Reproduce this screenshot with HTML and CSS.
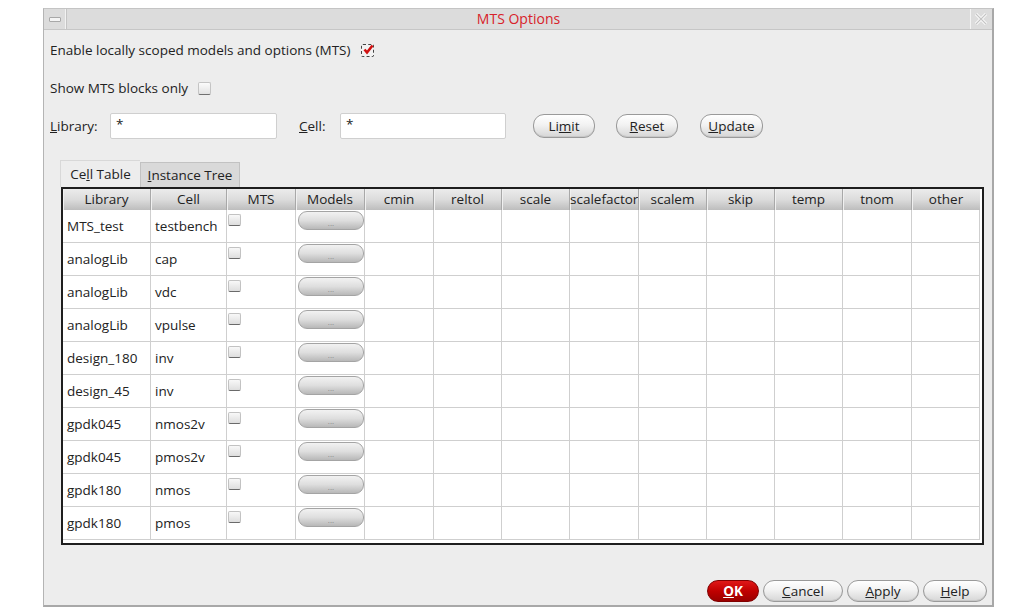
FILE: index.html
```html
<!DOCTYPE html>
<html>
<head>
<meta charset="utf-8">
<link rel="stylesheet" href="styles.css">
</head>
<body>
<div class="window">
  <div class="titlebar">
    <div class="tb-btn tb-min"><span class="min-bar"></span></div>
    <div class="title">MTS Options</div>
    <div class="tb-btn tb-close">
      <svg width="14" height="14" viewBox="0 0 14 14"><path d="M2 2 L12 12 M12 2 L2 12" stroke="#fff" stroke-width="3" fill="none"/><path d="M2 2 L12 12 M12 2 L2 12" stroke="#c4c4c4" stroke-width="1.2" fill="none"/></svg>
    </div>
  </div>
  <div class="body">
    <div class="line line1">
      <span>Enable locally scoped models and options (MTS)</span>
      <span class="chk chk-on"><svg width="12" height="12" viewBox="0 0 12 12"><path d="M2.5 5.5 L5 8.5 L10.5 1.5" stroke="#d01010" stroke-width="2.6" fill="none"/></svg></span>
    </div>
    <div class="line line2">
      <span>Show MTS blocks only</span>
      <span class="chk"></span>
    </div>
    <div class="filter">
      <label class="lbl lbl-lib"><u>L</u>ibrary:</label>
      <div class="input input-lib">*</div>
      <label class="lbl lbl-cell"><u>C</u>ell:</label>
      <div class="input input-cell">*</div>
      <button class="btn btn-limit">Li<u>m</u>it</button>
      <button class="btn btn-reset"><u>R</u>eset</button>
      <button class="btn btn-update"><u>U</u>pdate</button>
    </div>
    <div class="tabs">
      <div class="tab active">Ce<u>l</u>l Table</div>
      <div class="tab"><u>I</u>nstance Tree</div>
    </div>
    <div class="table">
      <div class="grid">
        <div class="th">Library</div><div class="th">Cell</div><div class="th">MTS</div><div class="th">Models</div><div class="th">cmin</div><div class="th">reltol</div><div class="th">scale</div><div class="th">scalefactor</div><div class="th">scalem</div><div class="th">skip</div><div class="th">temp</div><div class="th">tnom</div><div class="th">other</div>

        <div class="td">MTS_test</div><div class="td">testbench</div><div class="td tdc"><span class="cb"></span></div><div class="td tdm"><span class="mb">...</span></div><div class="td"></div><div class="td"></div><div class="td"></div><div class="td"></div><div class="td"></div><div class="td"></div><div class="td"></div><div class="td"></div><div class="td"></div>

        <div class="td">analogLib</div><div class="td">cap</div><div class="td tdc"><span class="cb"></span></div><div class="td tdm"><span class="mb">...</span></div><div class="td"></div><div class="td"></div><div class="td"></div><div class="td"></div><div class="td"></div><div class="td"></div><div class="td"></div><div class="td"></div><div class="td"></div>

        <div class="td">analogLib</div><div class="td">vdc</div><div class="td tdc"><span class="cb"></span></div><div class="td tdm"><span class="mb">...</span></div><div class="td"></div><div class="td"></div><div class="td"></div><div class="td"></div><div class="td"></div><div class="td"></div><div class="td"></div><div class="td"></div><div class="td"></div>

        <div class="td">analogLib</div><div class="td">vpulse</div><div class="td tdc"><span class="cb"></span></div><div class="td tdm"><span class="mb">...</span></div><div class="td"></div><div class="td"></div><div class="td"></div><div class="td"></div><div class="td"></div><div class="td"></div><div class="td"></div><div class="td"></div><div class="td"></div>

        <div class="td">design_180</div><div class="td">inv</div><div class="td tdc"><span class="cb"></span></div><div class="td tdm"><span class="mb">...</span></div><div class="td"></div><div class="td"></div><div class="td"></div><div class="td"></div><div class="td"></div><div class="td"></div><div class="td"></div><div class="td"></div><div class="td"></div>

        <div class="td">design_45</div><div class="td">inv</div><div class="td tdc"><span class="cb"></span></div><div class="td tdm"><span class="mb">...</span></div><div class="td"></div><div class="td"></div><div class="td"></div><div class="td"></div><div class="td"></div><div class="td"></div><div class="td"></div><div class="td"></div><div class="td"></div>

        <div class="td">gpdk045</div><div class="td">nmos2v</div><div class="td tdc"><span class="cb"></span></div><div class="td tdm"><span class="mb">...</span></div><div class="td"></div><div class="td"></div><div class="td"></div><div class="td"></div><div class="td"></div><div class="td"></div><div class="td"></div><div class="td"></div><div class="td"></div>

        <div class="td">gpdk045</div><div class="td">pmos2v</div><div class="td tdc"><span class="cb"></span></div><div class="td tdm"><span class="mb">...</span></div><div class="td"></div><div class="td"></div><div class="td"></div><div class="td"></div><div class="td"></div><div class="td"></div><div class="td"></div><div class="td"></div><div class="td"></div>

        <div class="td">gpdk180</div><div class="td">nmos</div><div class="td tdc"><span class="cb"></span></div><div class="td tdm"><span class="mb">...</span></div><div class="td"></div><div class="td"></div><div class="td"></div><div class="td"></div><div class="td"></div><div class="td"></div><div class="td"></div><div class="td"></div><div class="td"></div>

        <div class="td">gpdk180</div><div class="td">pmos</div><div class="td tdc"><span class="cb"></span></div><div class="td tdm"><span class="mb">...</span></div><div class="td"></div><div class="td"></div><div class="td"></div><div class="td"></div><div class="td"></div><div class="td"></div><div class="td"></div><div class="td"></div><div class="td"></div>
      </div>
    </div>
    <div class="footer">
      <button class="btn btn-ok"><u>O</u>K</button>
      <button class="btn btn-cancel"><u>C</u>ancel</button>
      <button class="btn btn-apply"><u>A</u>pply</button>
      <button class="btn btn-help"><u>H</u>elp</button>
    </div>
  </div>
</div>
</body>
</html>
```

FILE: styles.css
```css
html, body {
  margin: 0;
  padding: 0;
  background: #ffffff;
}
body {
  font-family: "Open Sans", "DejaVu Sans", sans-serif;
  font-size: 13.5px;
  color: #222;
}
.window {
  margin: 8px 0 0 43px;
  width: 948px;
  height: 596px;
  border-top: 1px solid #c4c4c4;
  border-left: 1px solid #b4b4b4;
  border-right: 2px solid #a8a8a8;
  border-bottom: 2px solid #a8a8a8;
  background: #ededed;
  display: flex;
  flex-direction: column;
}
.titlebar {
  height: 20px;
  background: #dcdcdc;
  border-bottom: 1px solid #c6c6c6;
  display: flex;
  align-items: stretch;
}
.tb-btn {
  width: 21px;
  display: flex;
  align-items: center;
  justify-content: center;
}
.tb-min {
  border-right: 1px solid #f2f2f2;
  box-shadow: 1px 0 0 #c4c4c4;
}
.min-bar {
  width: 10px;
  height: 3px;
  background: #f4f4f4;
  border: 1px solid #a8a8a8;
  border-radius: 1px;
}
.tb-close {
  width: 20px;
  border-left: 1px solid #f4f4f4;
  margin-right: 1px;
}
.title {
  flex: 1;
  text-align: center;
  color: #d8222a;
  line-height: 20px;
  font-size: 14px;
  padding-left: 1px;
}
.body {
  flex: 1;
  padding: 0 0 0 6px;
  display: flex;
  flex-direction: column;
}
.line {
  display: flex;
  align-items: center;
  height: 18px;
}
.line1 { margin-top: 11px; }
.line2 { margin-top: 20px; }
.chk {
  display: inline-block;
  width: 11px;
  height: 11px;
  margin-left: 10px;
  background: linear-gradient(#fbfbfb, #e2e2e2);
  border: 1px solid #c4c4c4;
  border-bottom: 1px solid #707070;
  border-radius: 2px;
  position: relative;
}
.chk-on {
  border: 1px dashed #444;
  background: #f2f2f2;
}
.chk-on svg {
  position: absolute;
  left: 0;
  top: -1px;
}
.filter {
  display: flex;
  align-items: center;
  margin-top: 16px;
  height: 26px;
}
.lbl { white-space: nowrap; }
.lbl-lib { width: 60px; }
.lbl-cell { margin-left: 22px; width: 41px; }
.input {
  height: 26px;
  box-sizing: border-box;
  background: #fff;
  border: 1px solid #cfcfcf;
  border-radius: 2px;
  padding-left: 5px;
  line-height: 20px;
}
.input-lib { width: 167px; }
.input-cell { width: 166px; }
.btn {
  font-family: "Open Sans", "DejaVu Sans", sans-serif;
  font-size: 13.5px;
  color: #222;
  height: 24px;
  border: 1px solid #9a9a9a;
  border-radius: 11px;
  background: linear-gradient(#ffffff 0%, #f2f2f2 45%, #d6d6d6 100%);
  box-shadow: inset 0 -1px 0 #c8c8c8;
  padding: 0;
  line-height: 20px;
}
.btn-limit { margin-left: 27px; width: 62px; }
.btn-reset { margin-left: 21px; width: 62px; }
.btn-update { margin-left: 22px; width: 63px; }
.tabs {
  display: flex;
  align-items: flex-end;
  margin-top: 21px;
  margin-left: 10px;
  height: 27px;
}
.tab {
  height: 25px;
  line-height: 24px;
  padding: 0 4px;
  background: #d9d9d9;
  border: 1px solid #c2c2c2;
  border-bottom: none;
  box-sizing: border-box;
  width: 100px;
  text-align: center;
  white-space: nowrap;
}
.tab.active {
  height: 27px;
  width: 80px;
  background: #ededed;
  border-color: #d8d8d8;
  border-right: none;
  line-height: 26px;
}
.table {
  margin-left: 11px;
  width: 919px;
  height: 354px;
  border: 2px solid #1e1e1e;
  background: #ffffff;
  box-sizing: content-box;
}
.grid {
  display: grid;
  grid-template-columns: 88px 76px 69px 69px 69px 68px 68px 69px 68px 68px 68px 69px 68px;
  grid-template-rows: 21px repeat(10, 33px);
}
.th {
  background: linear-gradient(#ececec 0%, #dcdcdc 50%, #bdbdbd 100%);
  border-right: 1px solid #a8a8a8;
  box-shadow: inset 1px 0 0 #f0f0f0;
  text-align: center;
  line-height: 21px;
  overflow: hidden;
  white-space: nowrap;
}
.th:nth-child(13) { border-right: none; }
.td {
  border-right: 1px solid #cfcfcf;
  border-bottom: 1px solid #cfcfcf;
  box-sizing: border-box;
  padding-left: 4px;
  line-height: 32px;
  white-space: nowrap;
}
.tdc {
  padding: 4px 0 0 1px;
  line-height: 1;
}
.cb {
  display: block;
  width: 11px;
  height: 10px;
  background: linear-gradient(#f8f8f8, #dedede);
  border: 1px solid #c2c2c2;
  border-bottom: 1px solid #6a6a6a;
  border-radius: 2px;
}
.tdm {
  padding: 1px 0 0 2px;
  line-height: 1;
}
.mb {
  display: block;
  width: 64px;
  height: 17px;
  border: 1px solid #a4a4a4;
  border-radius: 9px;
  background: linear-gradient(#f2f2f2 0%, #dedede 50%, #b8b8b8 100%);
  color: #8a8a8a;
  font-size: 8px;
  text-align: center;
  line-height: 22px;
  overflow: hidden;
}
.footer {
  display: flex;
  justify-content: flex-end;
  margin-top: auto;
  margin-bottom: 3px;
  padding-right: 5px;
  gap: 4px;
}
.footer .btn { height: 22px; line-height: 19px; }
.btn-ok {
  width: 52px;
  background: linear-gradient(#e01818 0%, #c00000 50%, #9a0000 100%);
  border-color: #800000;
  color: #fff;
  font-weight: bold;
  box-shadow: none;
}
.btn-cancel { width: 80px; }
.btn-apply { width: 72px; }
.btn-help { width: 64px; }
```
